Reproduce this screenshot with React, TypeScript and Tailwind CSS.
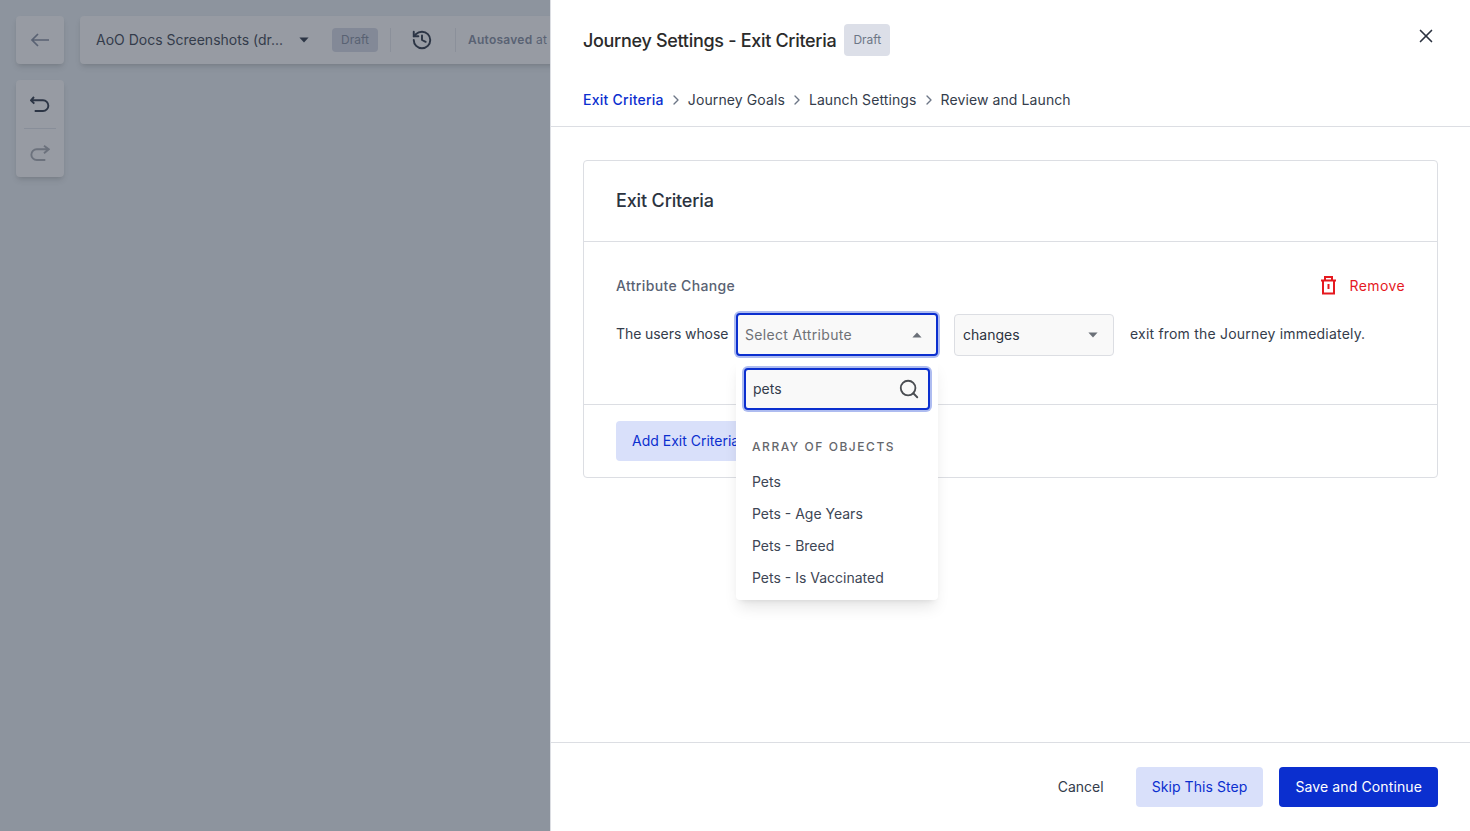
import React from "react";
import { ChevronRight, History, Search, X } from "lucide-react";

const steps = ["Journey Goals", "Launch Settings", "Review and Launch"];
const options = ["Pets", "Pets - Age Years", "Pets - Breed", "Pets - Is Vaccinated"];

const Caret = ({ up = false, color = "#6b7078" }: { up?: boolean; color?: string }) => (
  <svg width="10" height="6" viewBox="0 0 10 6" className="shrink-0">
    <path d={up ? "M5 0.5 9.6 5.5H0.4Z" : "M0.4 0.5H9.6L5 5.5Z"} fill={color} />
  </svg>
);

const TrashIcon = () => (
  <svg width="18" height="20" viewBox="0 0 18 20" fill="none" stroke="#e5191f" strokeWidth="2">
    <path d="M1 4.5h15M5 4.5V1h7v3.5M3 4.5V17.5h11V4.5M8.5 8v5" />
  </svg>
);

const BackIcon = () => (
  <svg width="20" height="20" viewBox="0 0 20 20" fill="none" stroke="#596273" strokeWidth="1.7">
    <path d="M19 10H2M8 4 2 10l6 6" />
  </svg>
);

const UndoIcon = () => (
  <svg width="20" height="20" viewBox="0 0 20 20" fill="none" stroke="#2c3545" strokeWidth="1.9">
    <path d="M4 3 1 6.3l3.3 3.4M1 6.3h12a5.3 5.3 0 0 1 0 10.7H4.7" />
  </svg>
);

const RedoIcon = () => (
  <svg width="20" height="20" viewBox="0 0 20 20" fill="none" stroke="#6c727d" strokeWidth="1.9">
    <path d="M14 2.7l4.7 3.6L14 10.3M18.7 6.3H6.7a5.3 5.3 0 0 0 0 10.7h8.6" />
  </svg>
);

const Canvas = () => (
  <div className="w-[550px] shrink-0 h-full bg-[#8d949e] overflow-hidden p-4 flex gap-4 items-start">
    <div className="flex flex-col gap-4 shrink-0">
      <div className="w-12 h-12 rounded bg-[#979ba3] shadow-md flex items-center justify-center">
        <BackIcon />
      </div>
      <div className="w-12 h-[97px] rounded bg-[#979ba3] shadow-md flex flex-col items-center">
        <div className="h-12 flex items-center justify-center">
          <UndoIcon />
        </div>
        <div className="w-8 h-px bg-[#888e99]" />
        <div className="h-12 flex items-center justify-center">
          <RedoIcon />
        </div>
      </div>
    </div>
    <div className="h-12 w-[500px] shrink-0 rounded bg-[#979ba3] shadow-md flex items-center pl-4">
      <span className="text-sm text-[#343c4b] w-[188px] shrink-0 whitespace-nowrap">AoO Docs Screenshots (dr...</span>
      <span className="ml-[15px] shrink-0"><Caret color="#2c3545" /></span>
      <span className="ml-[23px] w-[46px] h-6 shrink-0 rounded bg-[#838997] text-[#596273] text-xs flex items-center justify-center">Draft</span>
      <div className="ml-3 w-px h-6 shrink-0 bg-[#8b909a]" />
      <span className="ml-5 shrink-0"><History size={22} strokeWidth={2.1} className="text-[#2c3545]" /></span>
      <div className="ml-[22px] w-px h-6 shrink-0 bg-[#8b909a]" />
      <span className="ml-3 text-xs tracking-[0.25px] text-[#596273] whitespace-nowrap"><b className="font-semibold">Autosaved</b> at</span>
    </div>
  </div>
);

const CriteriaCard = () => (
  <div className="border border-[#dcdee3] rounded bg-white">
    <div className="h-[81px] flex items-center pb-[2px] px-8 border-b border-[#dcdee3]">
      <h2 className="text-[18px] tracking-[-0.15px] font-medium text-[#2b3340]">Exit Criteria</h2>
    </div>
    <div className="h-[163px] px-8 pt-[34px] border-b border-[#dcdee3]">
      <div className="flex items-center justify-between h-[20px]">
        <span className="text-sm tracking-[0.35px] font-medium text-[#596273]">Attribute Change</span>
        <span className="flex items-center gap-[11px] text-sm tracking-[0.4px] text-[#e5191f]"><TrashIcon />Remove</span>
      </div>
      <div className="flex items-center mt-[17px] text-sm text-[#343c4b]">
        <span className="w-[120px] pb-[2px] tracking-[-0.08px] whitespace-nowrap">The users whose</span>
        <div className="relative w-[202px] h-[43px] rounded border-2 border-[#0b2fcf] ring-2 ring-[#aebcf0] bg-[#f9f9f9] flex items-center justify-between pl-[7px] pr-[14px]">
          <span className="text-[#6e7176] tracking-[0.33px]">Select Attribute</span>
          <Caret up />
          {/* open dropdown lies over the card */}
          <div className="absolute left-[-2px] top-[45px] w-[202px] h-[240px] bg-white rounded shadow-lg z-10 px-2 pt-2">
            <div className="h-[42px] rounded border-2 border-[#0b2fcf] ring-2 ring-[#aebcf0] bg-[#f9f9f9] flex items-center justify-between pl-[7px] pr-[8px]">
              <span className="text-[#343c4b]">pets</span>
              <Search size={22} strokeWidth={2} className="text-[#4a4d52]" />
            </div>
            <div className="px-2 pt-[29px] text-xs font-medium tracking-[1.55px] text-[#65676c] leading-4 whitespace-nowrap">ARRAY OF OBJECTS</div>
            <div className="px-2 pt-[11px]">
              {options.map((o) => (
                <div key={o} className="h-8 flex items-center text-[#3d4655] whitespace-nowrap">{o}</div>
              ))}
            </div>
          </div>
        </div>
        <div className="ml-4 w-[160px] h-[42px] rounded border border-[#dcdee3] bg-[#f9f9f9] flex items-center justify-between pl-2 pr-[15px]">
          <span className="text-[#2b3340]">changes</span>
          <Caret />
        </div>
        <span className="ml-4 pb-[2px] tracking-[0.2px] whitespace-nowrap">exit from the Journey immediately.</span>
      </div>
    </div>
    <div className="h-[72px] px-8 pt-4">
      <button className="h-10 px-4 rounded bg-[#d9e0fa] text-sm text-[#0b2fcf]">Add Exit Criteria</button>
    </div>
  </div>
);

export default function App() {
  return (
    <div className="flex w-full h-[831px] overflow-hidden bg-white font-['Inter',sans-serif]">
      <Canvas />
      <div className="flex-1 min-w-0 h-full flex flex-col border-l border-[#dcdee3]">
        <div className="h-[127px] shrink-0 border-b border-[#dcdee3] px-8 pt-6">
          <div className="flex items-center h-8">
            <h1 className="text-[18px] tracking-[-0.31px] font-medium text-[#2b2b2b]">Journey Settings - Exit Criteria</h1>
            <span className="ml-2 w-[46px] h-8 rounded bg-[#dcdfe8] text-xs text-[#6c7686] flex items-center justify-center">Draft</span>
            <X size={22} strokeWidth={1.8} className="ml-auto -mt-2 mr-px text-[#2b3340]" />
          </div>
          <div className="flex items-center mt-[34px] h-5 text-sm text-[#343c4b]">
            <span className="font-medium tracking-[0.25px] text-[#0b2fcf]">Exit Criteria</span>
            {steps.map((s) => (
              <React.Fragment key={s}>
                <ChevronRight size={16} strokeWidth={2} className="mx-1 text-[#6c7686]" />
                <span className="tracking-[0.1px]">{s}</span>
              </React.Fragment>
            ))}
          </div>
        </div>
        <div className="flex-1 px-8 pt-[33px]">
          <CriteriaCard />
        </div>
        <div className="h-[89px] shrink-0 border-t border-[#dcdee3] px-8 flex items-center justify-end text-sm">
          <button className="text-[#343c4b] mr-8">Cancel</button>
          <button className="h-10 px-4 rounded bg-[#d9e0fa] text-[#0b2fcf] tracking-[0.07px] mr-4">Skip This Step</button>
          <button className="h-10 px-4 rounded bg-[#0b2fcf] text-white tracking-[0.12px]">Save and Continue</button>
        </div>
      </div>
    </div>
  );
}
